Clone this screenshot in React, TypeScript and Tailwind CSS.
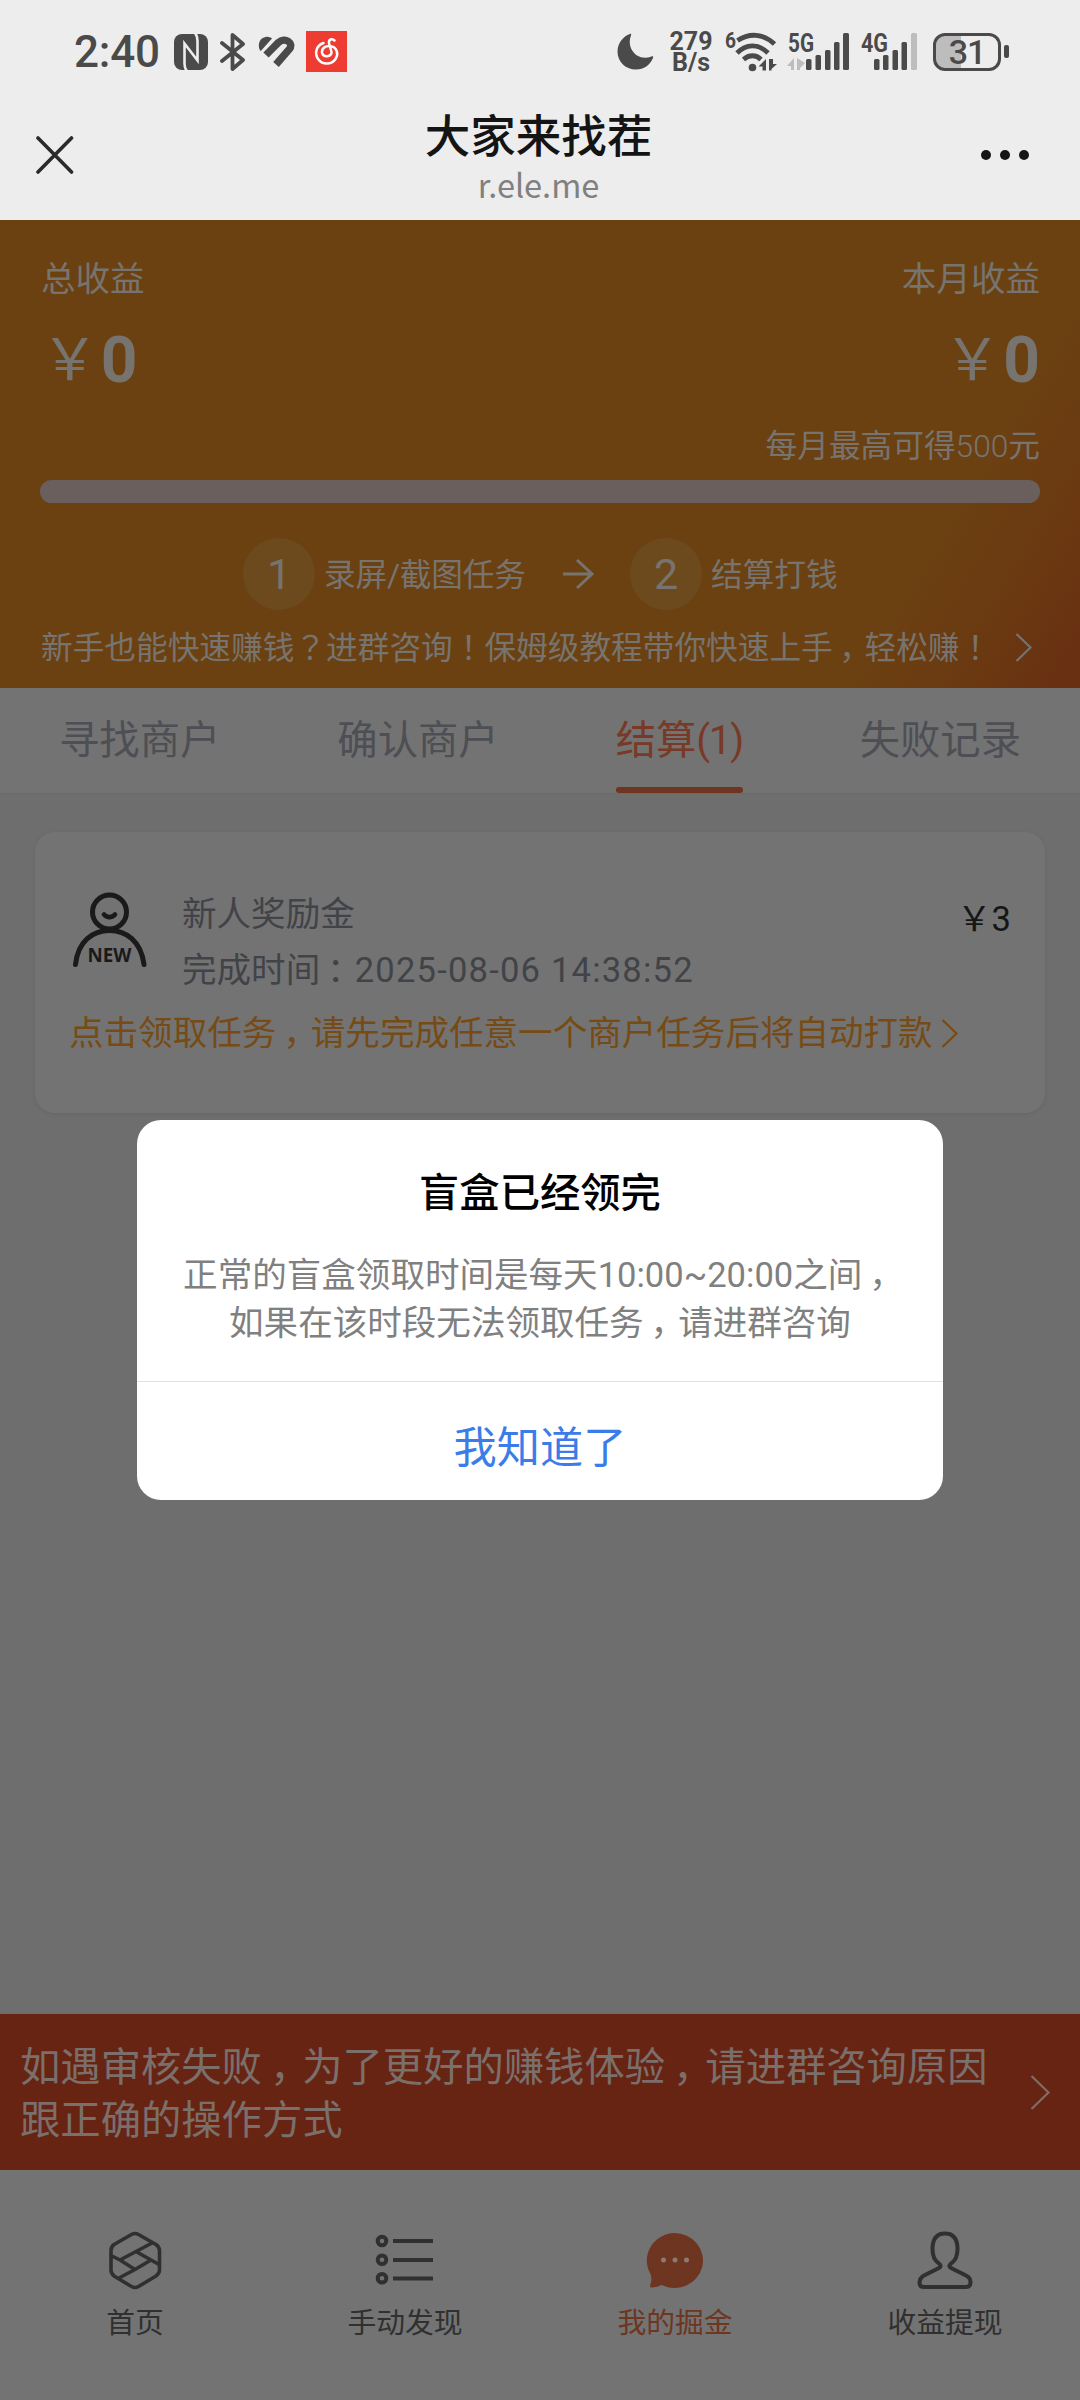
import React, { Fragment } from "react";

/** Chinese copy with full-width punctuation centred in its em box. */
function Zh({ children }: { children: string }) {
  const parts = children.split(/([，：？！])/);
  return (
    <>
      {parts.map((p, i) =>
        p === "，" || p === "：" ? (
          <span key={i} className="inline-block w-[1em] pl-[0.2em] leading-none whitespace-nowrap">
            {p}
          </span>
        ) : p === "？" || p === "！" ? (
          <span key={i} className="font-['Noto_Sans_CJK_TC',sans-serif] leading-none">
            {p}
          </span>
        ) : (
          <Fragment key={i}>{p}</Fragment>
        )
      )}
    </>
  );
}

function Chevron({ w, h, className }: { w: number; h: number; className: string }) {
  return (
    <svg width={w} height={h} viewBox={`0 0 ${w} ${h}`} className={className} fill="none" stroke="currentColor" strokeWidth="2.2">
      <path d={`M1.5 1 L${w - 1.5} ${h / 2} L1.5 ${h - 1}`} />
    </svg>
  );
}

function StatusBar() {
  return (
    <div className="flex h-[103px] shrink-0 items-center pl-[74px] text-[#4a4a4a]">
      <div className="w-[100px] text-[44px] leading-[44px] font-medium tracking-[-0.2px]">2:40</div>
      <svg width="34" height="36" viewBox="0 0 34 36">
        <rect width="34" height="36" rx="8" fill="currentColor" />
        <path d="M13 37 C10.500 34.500 10.500 32 10.500 29 V9.500 L23.500 26.500 V7 C23.500 4 23.500 2 21 -1" stroke="#ededed" strokeWidth="2.600" fill="none" />
      </svg>
      <svg width="26" height="38" viewBox="0 0 26 38" className="ml-[12px]" fill="none" stroke="currentColor" strokeWidth="3.800" strokeLinejoin="round" strokeLinecap="round">
        <path d="M2 10 L23 27 L12.500 36 V2 L23 11 L2 28" />
      </svg>
      <svg width="37" height="32" viewBox="0 0 37 32" className="ml-[12px]" fill="none" stroke="currentColor">
        <path d="M2 14.500 C-1 8 2 2 7.500 1 C10.500 0.500 12.500 1.500 14 2.500 L3 14.700 Z" fill="currentColor" stroke="none" />
        <path d="M8 19 L20.500 6.500 C27 0.500 36 7 31.500 13 L18 28.500" strokeWidth="7.400" />
      </svg>
      <svg width="41" height="41" viewBox="0 0 41 41" className="ml-[11px]">
        <rect width="41" height="41" fill="#ee3c32" />
        <g fill="none" stroke="#fff" strokeWidth="2.500" strokeLinecap="round">
          <path d="M28.500 9.500 C26 7 22.500 8.500 23 12 L25.500 21 C26 26 17 27 16 21.500 C15.500 17 20 14.500 24 15 C31 16 33 23 29.500 28 C25.500 34 16.500 34 12.500 28.500 C7.500 22 11 14 17.500 12" />
        </g>
      </svg>

      <div className="ml-auto flex h-[46px] items-center pr-[71px]">
        <svg width="37" height="37" viewBox="0 0 37 37" fill="currentColor">
          <path d="M13 1 C14 0.500 14.500 1 14 2.500 C9 15 20 29 34.500 23.500 C36 23 36.500 23.500 36 25 C33 32 27 36.500 19 36.500 C8 36.500 0.500 28.500 0.500 18.500 C0.500 10 6 3.500 13 1 Z" />
        </svg>
        <div className="ml-[15px] w-[44px] text-center text-[25px] leading-[21px] font-bold">
          <div>279</div>
          <div>B/s</div>
        </div>
        <svg width="54" height="42" viewBox="0 0 54 42" className="ml-[12px] overflow-visible">
          <text x="0" y="17" fontSize="22" fontWeight="700" fill="currentColor" textLength="11" lengthAdjust="spacingAndGlyphs">6</text>
          <g fill="none" stroke="currentColor" strokeWidth="4.800">
            <path d="M12.500 9.500 C24 2 38 2 49.500 13" />
            <path d="M12 22 C21 13 33 12 43 22" />
            <path d="M18.500 28.500 C24 23.500 31 23.500 36 28.500" />
          </g>
          <circle cx="27.500" cy="36.500" r="3.800" fill="currentColor" />
          <path d="M41 28 V39.500 H37.500 V35.500 H33.500 Z M44 28 V39.500 H46.500 V38 L52 33 H48 V28 Z" fill="currentColor" />
        </svg>
        <svg width="63" height="40" viewBox="0 0 63 40" className="ml-[8px] overflow-visible">
          <text x="1" y="19.500" fontSize="26" fontWeight="700" fill="currentColor" textLength="26" lengthAdjust="spacingAndGlyphs">5G</text>
          <path d="M7 26 V38 H4 V34 H0 Z M10 26 V38 H13 V36 L18 31 Z" fill="#bdbdbd" />
          <g fill="currentColor">
            <rect x="19" y="27" width="5.500" height="11" rx="1.500" />
            <rect x="28.500" y="23" width="5.500" height="15" rx="1.500" />
            <rect x="38" y="18" width="5.500" height="20" rx="1.500" />
            <rect x="47" y="10" width="5.500" height="28" rx="1.500" />
            <rect x="56" y="1" width="6" height="37" rx="1.500" />
          </g>
        </svg>
        <svg width="58" height="40" viewBox="0 0 58 40" className="ml-[10px] overflow-visible">
          <text x="1" y="19.500" fontSize="26" fontWeight="700" fill="currentColor" textLength="27" lengthAdjust="spacingAndGlyphs">4G</text>
          <g fill="currentColor">
            <rect x="14" y="27" width="5.500" height="11" rx="1.500" />
            <rect x="23" y="23" width="5.500" height="15" rx="1.500" />
            <rect x="32.500" y="18" width="5.500" height="20" rx="1.500" />
            <rect x="41.500" y="10" width="5.500" height="28" rx="1.500" />
          </g>
          <rect x="51" y="1" width="6" height="37" rx="1.500" fill="#bdbdbd" />
        </svg>
        <div className="ml-[15px] h-[38px] w-[68px] overflow-hidden rounded-[12px] border-[3.500px] border-[#4a4a4a] bg-[linear-gradient(90deg,#bdbdbd_25px,#ededed_25px)] text-center text-[34px] leading-[32px] font-medium tracking-[-1px]">
          31
        </div>
        <div className="ml-[3px] h-[13px] w-[5px] rounded-[2px] bg-[#4a4a4a]" />
      </div>
    </div>
  );
}

function TitleBar() {
  return (
    <div className="flex h-[117px] shrink-0 justify-between pr-[51px] pl-[36px]">
      <svg width="38" height="38" viewBox="0 0 38 38" className="mt-[33px]" stroke="#2a2a2a" strokeWidth="3.600" strokeLinecap="round">
        <path d="M2 2 L35.500 36 M35.500 2 L2 36" />
      </svg>
      <div className="ml-[22px] flex flex-col items-center">
        <h1 className="mt-[10px] text-[45.500px] leading-[50px] font-medium text-[#141414]">大家来找茬</h1>
        <p className="-mt-px font-['Noto_Sans_CJK_SC',sans-serif] text-[32.500px] leading-[44px] text-[#808080]">r.ele.me</p>
      </div>
      <div className="mt-[47px] flex h-[10px] gap-[9px]">
        <i className="size-[10px] rounded-full bg-[#151515]" />
        <i className="size-[10px] rounded-full bg-[#151515]" />
        <i className="size-[10px] rounded-full bg-[#151515]" />
      </div>
    </div>
  );
}

function Amount() {
  return (
    <div className="flex h-[60px] items-center">
      <span className="text-[57.600px] leading-[60px]">￥</span>
      <span className="w-[41px] text-center text-[64px] leading-[60px] font-bold">0</span>
    </div>
  );
}

function Earnings() {
  return (
    <section className="h-[468px] shrink-0 bg-[linear-gradient(121deg,#6b4112_82%,#6b3b11_89%,#693111_98%)] pr-[40px] pl-[41px] text-[#77746f]">
      <div className="flex justify-between pt-[39px] text-[34.560px] leading-[40px]">
        <span>总收益</span>
        <span>本月收益</span>
      </div>
      <div className="mt-[32px] -mr-[2px] flex justify-between">
        <Amount />
        <Amount />
      </div>
      <div className="mt-[36px] text-right text-[31.680px] leading-[40px]">
        每月最高可得<span className="font-light">500</span>元
      </div>
      <div className="mt-[13px] -ml-px h-[23px] rounded-full bg-[#6b5f5e]" />
      <div className="mt-[35px] flex items-center pl-[202px] text-[31.680px] leading-[40px] whitespace-nowrap">
        <div className="size-[72px] shrink-0 rounded-full bg-[#6c4a1e] text-center text-[43px] leading-[72px]">1</div>
        <span className="mt-[3px] ml-[9px] w-[202px] shrink-0 tracking-[-0.2px]">录屏/截图任务</span>
        <svg width="32" height="32" viewBox="0 0 32 32" className="ml-[37px] shrink-0" fill="none" stroke="currentColor" strokeWidth="3">
          <path d="M0 16 H29 M14 2 L29 16 L14 30" />
        </svg>
        <div className="ml-[35px] size-[72px] shrink-0 rounded-full bg-[#6c4a1e] text-center text-[43px] leading-[72px]">2</div>
        <span className="mt-[3px] ml-[9px]">结算打钱</span>
      </div>
      <div className="mt-[19px] flex items-center justify-between pr-[8px] text-[31.680px] leading-[40px] whitespace-nowrap">
        <span>
          <Zh>新手也能快速赚钱？进群咨询！保姆级教程带你快速上手，轻松赚！</Zh>
        </span>
        <Chevron w={17} h={29} className="-mt-[3px] shrink-0" />
      </div>
    </section>
  );
}

function Tabs() {
  const tabs = ["寻找商户", "确认商户", "结算(1)", "失败记录"];
  return (
    <nav className="flex h-[106px] shrink-0 justify-between border-b border-[#6a6a6a] bg-[#737373] px-[59px] text-[40.320px] leading-[105px]">
      {tabs.map((t, i) =>
        i === 2 ? (
          <div key={t} className="flex w-[127px] flex-col text-[#783a26]">
            <span className="h-[99px] whitespace-nowrap">
              结算<span className="tracking-[-1.300px]">(1)</span>
            </span>
            <i className="h-[6px] rounded-full bg-[#6f3520]" />
          </div>
        ) : (
          <div key={t} className="text-[#4d4f54]">{t}</div>
        )
      )}
    </nav>
  );
}

function RewardCard() {
  return (
    <article className="mx-[35px] mt-[38px] h-[281px] rounded-[20px] bg-[#737373] pt-[59px] pr-[34px] pl-[35px] shadow-[0_1px_4px_rgba(0,0,0,0.08)]">
      <div className="flex">
        <svg width="78" height="78" viewBox="0 0 78 78" className="ml-[2px]" fill="none" stroke="#1a1a1a" strokeWidth="5" strokeLinecap="round">
          <circle cx="37.500" cy="21" r="17" />
          <path d="M32 23.500 C35 27 40 27 43 23.500" strokeWidth="4.600" />
          <path d="M3.500 73.500 C6 50 21 39.500 37.500 39.500 C54 39.500 69 50 72 73.500" />
          <text x="15.500" y="71" fontSize="19.500" fontWeight="700" fill="#1a1a1a" stroke="none" textLength="44" lengthAdjust="spacingAndGlyphs" fontFamily="Open Sans">NEW</text>
        </svg>
        <div className="ml-[32px] text-[34.560px] leading-[56px] text-[#414349]">
          <div className="-mt-[5px]">新人奖励金</div>
          <div className="whitespace-nowrap">
            <Zh>完成时间：</Zh>
            <span className="tracking-[1.200px]">2025-08-06 14:38:52</span>
          </div>
        </div>
        <div className="mt-[8px] ml-auto text-[34.560px] leading-[40px] text-[#161616]">￥3</div>
      </div>
      <div className="mt-[11px] -ml-px flex items-center text-[34.560px] leading-[48px] whitespace-nowrap text-[#764b15]">
        <span>
          <Zh>点击领取任务，请先完成任意一个商户任务后将自动打款</Zh>
        </span>
        <Chevron w={17} h={29} className="ml-[8px]" />
      </div>
    </article>
  );
}

function Notice() {
  return (
    <div className="mt-auto flex h-[156px] shrink-0 items-center bg-[#682412] pr-[30px] pl-[20px] text-[#7b6f6c]">
      <p className="mt-[4px] w-[970px] text-[40.320px] leading-[53px]">
        <Zh>如遇审核失败，为了更好的赚钱体验，请进群咨询原因</Zh>
        <br />
        跟正确的操作方式
      </p>
      <Chevron w={20} h={35} className="ml-auto" />
    </div>
  );
}

function BottomNav() {
  return (
    <nav className="grid h-[230px] shrink-0 grid-cols-4 bg-[#737373] pt-[60px] text-center text-[28.800px] leading-[40px] text-[#303030]">
      <div className="flex flex-col items-center">
        <svg width="60" height="60" viewBox="0 0 60 60" fill="none" stroke="currentColor" strokeWidth="3.600" strokeLinejoin="round">
          <path d="M26.500 4.500 Q30 2.500 33.500 4.500 L51 14.500 Q54.500 17 54.500 20.500 V40 Q54.500 43.500 51 46 L33.500 56.500 Q30 58.500 26.500 56.500 L9 46 Q6 43.500 6 40 V20.500 Q6 17 9 14.500 Z" />
          <path d="M47 13 L15 30 L30 39.500 L46 30 L30 21 M6 25.500 L15 30 M46 30 L54 34.500 M30 39.500 L14 48" />
        </svg>
        <span className="mt-[13px]">首页</span>
      </div>
      <div className="flex flex-col items-center">
        <svg width="60" height="60" viewBox="0 0 60 60" fill="none" stroke="currentColor" strokeWidth="4">
          <circle cx="7" cy="11" r="4.300" />
          <circle cx="7" cy="29.700" r="4.300" />
          <circle cx="7" cy="48.300" r="4.300" />
          <path d="M18 11 H58 M18 30 H58 M18 48.500 H58" />
        </svg>
        <span className="mt-[13px]">手动发现</span>
      </div>
      <div className="flex flex-col items-center text-[#6e3520]">
        <svg width="60" height="60" viewBox="0 0 60 60" fill="currentColor">
          <path d="M29.500 3 A28.500 27.500 0 1 1 16.500 55 C14 56 11 57.500 7 57.500 C4.500 57.500 5 56 5.500 54 C6.500 51 7 48 5.500 44 A28.500 27.500 0 0 1 29.500 3 Z" />
          <g fill="#8b7a70">
            <circle cx="18.500" cy="30" r="2.500" />
            <circle cx="30" cy="30" r="2.500" />
            <circle cx="41.500" cy="30" r="2.500" />
          </g>
        </svg>
        <span className="mt-[13px]">我的掘金</span>
      </div>
      <div className="flex flex-col items-center">
        <svg width="60" height="60" viewBox="0 0 60 60" fill="none" stroke="currentColor" strokeWidth="4" strokeLinejoin="round">
          <path d="M30 3.500 C21 3.500 17.500 10 17.500 19 C17.500 26 20 31 24 33.500 C26.500 35.500 26 37 23 38.500 L9 45.500 C5.500 47.500 4.500 50 4.500 53 C4.500 55.500 6 57 9 57 H51 C54 57 55.500 55 55.500 52 C55.500 49 54 47 51 45.500 L37 38.500 C34 37 33.500 35.500 36 33.500 C40 31 42.500 26 42.500 19 C42.500 10 39 3.500 30 3.500 Z" />
        </svg>
        <span className="mt-[13px]">收益提现</span>
      </div>
    </nav>
  );
}

function Dialog() {
  return (
    <div className="absolute inset-x-0 top-[1120px] flex justify-center">
      <div className="flex h-[380px] w-[806px] flex-col overflow-hidden rounded-[24px] bg-white text-center">
        <h2 className="mt-[48px] text-[40.320px] leading-[52px] font-medium text-black">盲盒已经领完</h2>
        <p className="mt-[31px] h-[130px] text-[34.560px] leading-[48.400px] whitespace-nowrap text-[#808080]">
          <Zh>正常的盲盒领取时间是每天10:00~20:00之间，</Zh>
          <br />
          <Zh>如果在该时段无法领取任务，请进群咨询</Zh>
        </p>
        <button className="flex grow items-center justify-center border-t border-[#e2e2e2] pt-[15px] text-[43.200px] leading-[56px] text-[#3b7ce8]">
          我知道了
        </button>
      </div>
    </div>
  );
}

export default function App() {
  return (
    <div className="relative flex h-[2400px] w-[1080px] flex-col overflow-hidden bg-[#6e6e6e] font-['Roboto','Noto_Sans_CJK_SC',sans-serif]">
      <header className="h-[220px] shrink-0 bg-[#ededed]">
        <StatusBar />
        <TitleBar />
      </header>
      <Earnings />
      <Tabs />
      <RewardCard />
      <Notice />
      <BottomNav />
      <Dialog />
    </div>
  );
}
